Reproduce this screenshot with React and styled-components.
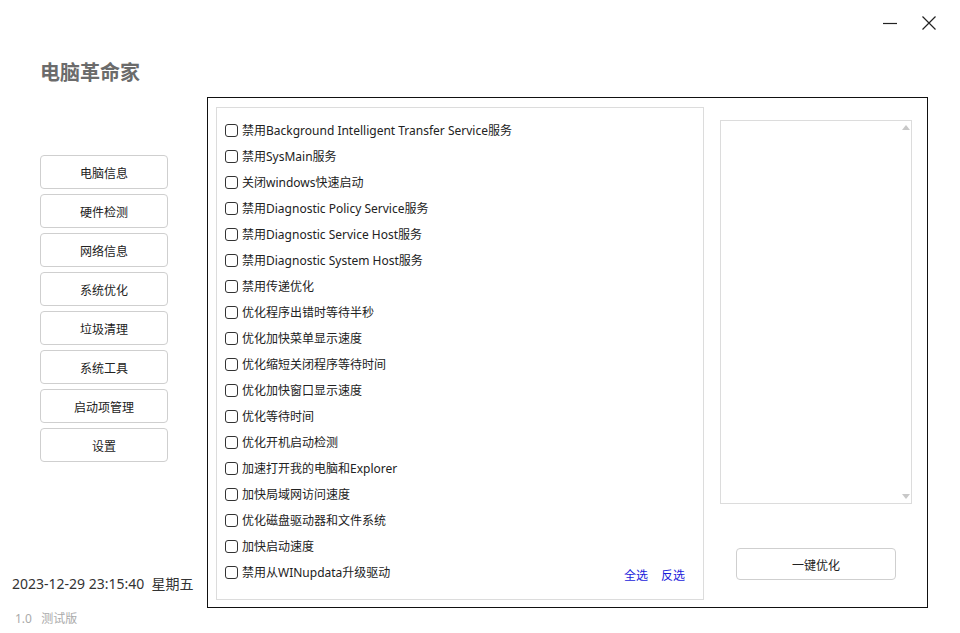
import styled, { createGlobalStyle } from "styled-components";

const GlobalStyle = createGlobalStyle`
  html, body {
    margin: 0;
    padding: 0;
    background: #ffffff;
  }
  body {
    font-family: "Noto Sans", "Noto Sans CJK SC", sans-serif;
    color: #222;
  }
`;

const navItems = ["电脑信息", "硬件检测", "网络信息", "系统优化", "垃圾清理", "系统工具", "启动项管理", "设置"];

const options = [
  "禁用Background Intelligent Transfer Service服务",
  "禁用SysMain服务",
  "关闭windows快速启动",
  "禁用Diagnostic Policy Service服务",
  "禁用Diagnostic Service Host服务",
  "禁用Diagnostic System Host服务",
  "禁用传递优化",
  "优化程序出错时等待半秒",
  "优化加快菜单显示速度",
  "优化缩短关闭程序等待时间",
  "优化加快窗口显示速度",
  "优化等待时间",
  "优化开机启动检测",
  "加速打开我的电脑和Explorer",
  "加快局域网访问速度",
  "优化磁盘驱动器和文件系统",
  "加快启动速度",
  "禁用从WINupdata升级驱动",
];

export default function App() {
  return (
    <Page>
      <GlobalStyle />
      <TopBar>
        <WinButton aria-label="minimize">
          <svg width="16" height="16" viewBox="0 0 16 16">
            <line x1="1" y1="8.5" x2="15" y2="8.5" stroke="#222" strokeWidth="1.2" />
          </svg>
        </WinButton>
        <WinButton aria-label="close">
          <svg width="16" height="16" viewBox="0 0 16 16">
            <path d="M1.5 1.5 L14.5 14.5 M14.5 1.5 L1.5 14.5" stroke="#222" strokeWidth="1.2" fill="none" />
          </svg>
        </WinButton>
      </TopBar>
      <Body>
        <Sidebar>
          <Title>电脑革命家</Title>
          <Nav>
            {navItems.map((n) => (
              <NavButton key={n}>{n}</NavButton>
            ))}
          </Nav>
          <Footer>
            <DateText>2023-12-29 23:15:40&nbsp;&nbsp;星期五</DateText>
            <Version>1.0&nbsp;&nbsp;&nbsp;测试版</Version>
          </Footer>
        </Sidebar>
        <Panel>
          <ListBox>
            {options.map((o, i) => (
              <Row key={o}>
                <CheckLabel>
                  <Check type="checkbox" />
                  <span>{o}</span>
                </CheckLabel>
                {i === options.length - 1 && (
                  <Links>
                    <LinkText>全选</LinkText>
                    <LinkText>反选</LinkText>
                  </Links>
                )}
              </Row>
            ))}
          </ListBox>
          <RightCol>
            <LogBox>
              <ArrowUp />
              <ArrowDown />
            </LogBox>
            <ActionButton>一键优化</ActionButton>
          </RightCol>
        </Panel>
      </Body>
    </Page>
  );
}

const Page = styled.div`
  width: 960px;
  height: 633px;
  overflow: hidden;
  display: flex;
  flex-direction: column;
`;

const TopBar = styled.div`
  height: 47px;
  display: flex;
  justify-content: flex-end;
  align-items: flex-start;
  padding: 15px 23px 0 0;
  box-sizing: border-box;
  gap: 23px;
`;

const WinButton = styled.div`
  width: 16px;
  height: 16px;
  display: flex;
  svg {
    display: block;
  }
`;

const Body = styled.div`
  display: flex;
  align-items: flex-start;
`;

const Sidebar = styled.div`
  width: 207px;
  height: 586px;
  display: flex;
  flex-direction: column;
`;

const Title = styled.div`
  margin: 12px 0 0 40px;
  font-family: "Noto Sans CJK SC", sans-serif;
  font-size: 20px;
  font-weight: 700;
  line-height: 26px;
  color: #6b6b6b;
`;

const Nav = styled.div`
  margin: 70px 0 0 40px;
  display: flex;
  flex-direction: column;
  gap: 5px;
`;

const NavButton = styled.div`
  width: 128px;
  height: 34px;
  box-sizing: border-box;
  border: 1px solid #cfcfcf;
  border-radius: 4px;
  display: flex;
  align-items: center;
  justify-content: center;
  font-family: "Noto Sans CJK SC", sans-serif;
  font-size: 12px;
  color: #222;
`;

const Footer = styled.div`
  margin-top: auto;
  display: flex;
  flex-direction: column;
  padding-bottom: 6px;
`;

const DateText = styled.div`
  padding-left: 12px;
  font-size: 14px;
  line-height: 20px;
  color: #333;
  white-space: nowrap;
`;

const Version = styled.div`
  margin-top: 17px;
  padding-left: 15px;
  font-size: 12px;
  line-height: 16px;
  color: #aaa;
`;

const Panel = styled.div`
  margin-top: 50px;
  width: 721px;
  height: 511px;
  box-sizing: border-box;
  border: 1px solid #111;
  padding: 9px 8px 7px 8px;
  display: flex;
  gap: 16px;
`;

const ListBox = styled.div`
  width: 488px;
  height: 493px;
  box-sizing: border-box;
  border: 1px solid #dcdcdc;
  padding: 9px 18px 0 8px;
  display: flex;
  flex-direction: column;
`;

const Row = styled.div`
  height: 26px;
  display: flex;
  align-items: center;
  justify-content: space-between;
`;

const CheckLabel = styled.label`
  display: flex;
  align-items: center;
  gap: 4px;
  font-size: 12.5px;
  color: #222;
  white-space: nowrap;
  span {
    font-size: 12px;
  }
`;

const Check = styled.input`
  appearance: none;
  margin: 0;
  width: 13px;
  height: 13px;
  box-sizing: border-box;
  border: 1px solid #333;
  border-radius: 3px;
  background: #fff;
`;

const Links = styled.div`
  display: flex;
  gap: 13px;
  padding-top: 6px;
`;

const LinkText = styled.span`
  font-size: 12px;
  color: #1a1adb;
`;

const RightCol = styled.div`
  display: flex;
  flex-direction: column;
  align-items: center;
  padding-top: 13px;
`;

const LogBox = styled.div`
  position: relative;
  width: 192px;
  height: 384px;
  box-sizing: border-box;
  border: 1px solid #dcdcdc;
`;

const ArrowUp = styled.span`
  position: absolute;
  top: 4px;
  right: 1px;
  width: 0;
  height: 0;
  border-left: 4px solid transparent;
  border-right: 4px solid transparent;
  border-bottom: 5px solid #c8c8c8;
`;

const ArrowDown = styled(ArrowUp)`
  top: auto;
  bottom: 4px;
  border-bottom: none;
  border-top: 5px solid #c8c8c8;
`;

const ActionButton = styled.div`
  margin-top: 44px;
  width: 160px;
  height: 32px;
  box-sizing: border-box;
  border: 1px solid #cfcfcf;
  border-radius: 4px;
  display: flex;
  align-items: center;
  justify-content: center;
  font-family: "Noto Sans CJK SC", sans-serif;
  font-size: 12px;
  color: #222;
`;
